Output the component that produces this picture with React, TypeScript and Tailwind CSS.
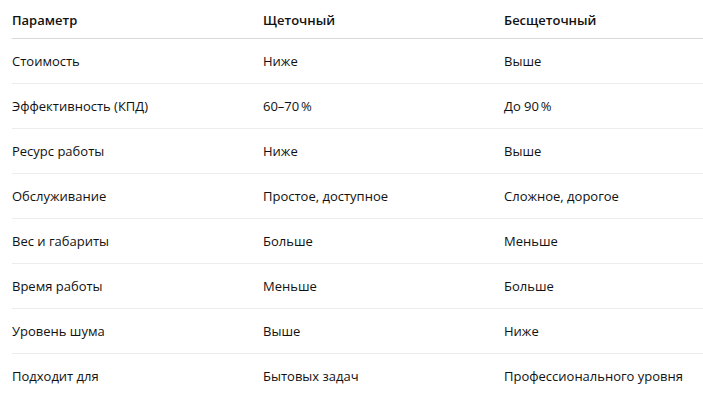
const rows: [string, string, string][] = [
  ['Стоимость', 'Ниже', 'Выше'],
  ['Эффективность (КПД)', '60–70\u202F%', 'До 90\u202F%'],
  ['Ресурс работы', 'Ниже', 'Выше'],
  ['Обслуживание', 'Простое, доступное', 'Сложное, дорогое'],
  ['Вес и габариты', 'Больше', 'Меньше'],
  ['Время работы', 'Меньше', 'Больше'],
  ['Уровень шума', 'Выше', 'Ниже'],
  ['Подходит для', 'Бытовых задач', 'Профессионального уровня'],
];

export default function App() {
  return (
    <div className="w-[703px] h-[402px] bg-white pl-3 text-[#111111] text-[13px] font-['Open_Sans',sans-serif] overflow-hidden">
      <table className="w-full border-collapse table-fixed">
        <colgroup>
          <col className="w-[251px]" />
          <col className="w-[241px]" />
          <col />
        </colgroup>
        <thead>
          <tr className="h-[38px] border-b border-[#d9d9d9]">
            <th className="text-left font-semibold p-0 pt-[3px] align-middle">Параметр</th>
            <th className="text-left font-semibold p-0 pt-[3px] align-middle">Щеточный</th>
            <th className="text-left font-semibold p-0 pt-[3px] align-middle">Бесщеточный</th>
          </tr>
        </thead>
        <tbody>
          {rows.map((r, i) => (
            <tr
              key={r[0]}
              className={i < rows.length - 1 ? 'h-[45px] border-b border-[#ededed]' : 'h-[45px]'}
            >
              <td className="p-0 pt-[2px] align-middle">{r[0]}</td>
              <td className="p-0 pt-[2px] align-middle">{r[1]}</td>
              <td className="p-0 pt-[2px] align-middle whitespace-nowrap">{r[2]}</td>
            </tr>
          ))}
        </tbody>
      </table>
    </div>
  );
}
